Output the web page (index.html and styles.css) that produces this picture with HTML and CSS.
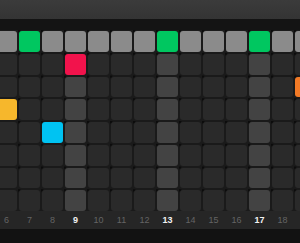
FILE: index.html
```html
<!DOCTYPE html>
<html lang="en">
<head>
    <meta charset="UTF-8">
    <meta name="viewport" content="width=device-width, initial-scale=1.0">
    <title>Sequencer</title>
    <link rel="stylesheet" href="styles.css">
</head>
<body>
    <div class="toolbar"></div>
    <div class="divider"></div>

    <div class="grid-area">
        <div class="grid">
            <!-- trigger row -->
            <div class="cell trig"></div><div class="cell trig on"></div><div class="cell trig"></div><div class="cell trig"></div><div class="cell trig"></div><div class="cell trig"></div><div class="cell trig"></div><div class="cell trig on"></div><div class="cell trig"></div><div class="cell trig"></div><div class="cell trig"></div><div class="cell trig on"></div><div class="cell trig"></div><div class="cell trig"></div>
            <!-- row 1 -->
            <div class="cell"></div><div class="cell"></div><div class="cell"></div><div class="cell red"></div><div class="cell"></div><div class="cell"></div><div class="cell"></div><div class="cell beat"></div><div class="cell"></div><div class="cell"></div><div class="cell"></div><div class="cell beat"></div><div class="cell"></div><div class="cell"></div>
            <!-- row 2 -->
            <div class="cell"></div><div class="cell"></div><div class="cell"></div><div class="cell beat"></div><div class="cell"></div><div class="cell"></div><div class="cell"></div><div class="cell beat"></div><div class="cell"></div><div class="cell"></div><div class="cell"></div><div class="cell beat"></div><div class="cell"></div><div class="cell orange"></div>
            <!-- row 3 -->
            <div class="cell yellow"></div><div class="cell"></div><div class="cell"></div><div class="cell beat"></div><div class="cell"></div><div class="cell"></div><div class="cell"></div><div class="cell beat"></div><div class="cell"></div><div class="cell"></div><div class="cell"></div><div class="cell beat"></div><div class="cell"></div><div class="cell"></div>
            <!-- row 4 -->
            <div class="cell"></div><div class="cell"></div><div class="cell cyan"></div><div class="cell beat"></div><div class="cell"></div><div class="cell"></div><div class="cell"></div><div class="cell beat"></div><div class="cell"></div><div class="cell"></div><div class="cell"></div><div class="cell beat"></div><div class="cell"></div><div class="cell"></div>
            <!-- row 5 -->
            <div class="cell"></div><div class="cell"></div><div class="cell"></div><div class="cell beat"></div><div class="cell"></div><div class="cell"></div><div class="cell"></div><div class="cell beat"></div><div class="cell"></div><div class="cell"></div><div class="cell"></div><div class="cell beat"></div><div class="cell"></div><div class="cell"></div>
            <!-- row 6 -->
            <div class="cell"></div><div class="cell"></div><div class="cell"></div><div class="cell beat"></div><div class="cell"></div><div class="cell"></div><div class="cell"></div><div class="cell beat"></div><div class="cell"></div><div class="cell"></div><div class="cell"></div><div class="cell beat"></div><div class="cell"></div><div class="cell"></div>
            <!-- row 7 -->
            <div class="cell"></div><div class="cell"></div><div class="cell"></div><div class="cell beat"></div><div class="cell"></div><div class="cell"></div><div class="cell"></div><div class="cell beat"></div><div class="cell"></div><div class="cell"></div><div class="cell"></div><div class="cell beat"></div><div class="cell"></div><div class="cell"></div>
        </div>
    </div>

    <div class="steps">
        <span>6</span><span>7</span><span>8</span><span class="bar">9</span><span>10</span><span>11</span><span>12</span><span class="bar">13</span><span>14</span><span>15</span><span>16</span><span class="bar">17</span><span>18</span>
    </div>

    <div class="footer"></div>
</body>
</html>
```

FILE: styles.css
```css
body {
    margin: 0;
    background-color: #121212;
    font-family: "Liberation Sans", Arial, sans-serif;
    overflow: hidden;
}

.toolbar {
    height: 19px;
    background: linear-gradient(#3b3b3b, #343434);
}

.divider {
    height: 11px;
    background-color: #141414;
}

.grid-area {
    height: 181px;
    padding-top: 1px;
    box-sizing: border-box;
    overflow: hidden;
    background-color: #1a1a1a;
    background-image: radial-gradient(circle at 0 0, #0c0c0c 2px, transparent 3px);
    background-size: 23px 22.75px;
    background-position: 18px 0;
}

.grid {
    display: grid;
    grid-template-columns: repeat(14, 21px);
    grid-template-rows: repeat(8, 20.75px);
    gap: 2px;
    margin-left: -4px;
}

.cell {
    background-color: #2a2a2a;
    border-radius: 3px;
}

.cell.beat {
    background-color: #434343;
}

.cell.trig {
    background-color: #8b8b8b;
}

.cell.trig.on {
    background-color: #00c760;
}

.cell.red {
    background-color: #f2134c;
}

.cell.orange {
    background-color: #f27a26;
}

.cell.yellow {
    background-color: #f6b72c;
}

.cell.cyan {
    background-color: #00c3f2;
}

.steps {
    display: grid;
    grid-template-columns: repeat(13, 21px);
    column-gap: 2px;
    margin-left: -4px;
    height: 18px;
    align-items: center;
    overflow: hidden;
    background-color: #262626;
    color: #646464;
    font-size: 9px;
    text-align: center;
}

.steps .bar {
    color: #f2f2f2;
    font-weight: bold;
}

.footer {
    height: 14px;
    background-color: #121212;
}
```
